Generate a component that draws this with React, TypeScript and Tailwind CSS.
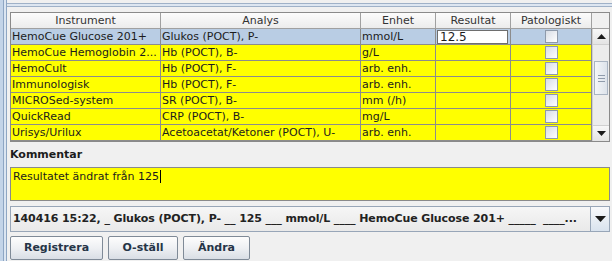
import React from 'react'

type Row = {
  instrument: string
  analys: string
  enhet: string
  resultat?: string
}

const rows: Row[] = [
  { instrument: 'HemoCue Glucose 201+', analys: 'Glukos (POCT), P-', enhet: 'mmol/L', resultat: '12.5' },
  { instrument: 'HemoCue Hemoglobin 2...', analys: 'Hb (POCT), B-', enhet: 'g/L' },
  { instrument: 'HemoCult', analys: 'Hb (POCT), F-', enhet: 'arb. enh.' },
  { instrument: 'Immunologisk', analys: 'Hb (POCT), F-', enhet: 'arb. enh.' },
  { instrument: 'MICROSed-system', analys: 'SR (POCT), B-', enhet: 'mm (/h)' },
  { instrument: 'QuickRead', analys: 'CRP (POCT), B-', enhet: 'mg/L' },
  { instrument: 'Urisys/Urilux', analys: 'Acetoacetat/Ketoner (POCT), U-', enhet: 'arb. enh.' },
]

const cols = 'grid grid-cols-[150px_200px_75px_75px_81px]'
const font = { fontFamily: '"DejaVu Sans", Verdana, sans-serif' }

function CheckBox() {
  return (
    <div className="w-[13px] h-[13px] border border-[#8e9aab] bg-gradient-to-br from-[#d8dde6] to-[#ffffff]" />
  )
}

function Arrow({ up }: { up?: boolean }) {
  return (
    <svg width="9" height="5" viewBox="0 0 9 5">
      {up ? <path d="M0 5 L4.5 0 L9 5 Z" fill="#1a1a1a" /> : <path d="M0 0 L4.5 5 L9 0 Z" fill="#1a1a1a" />}
    </svg>
  )
}

function ScrollBar() {
  return (
    <div className="w-[17px] flex flex-col bg-[#ececec] border-l border-[#d0d0d0]">
      <div className="h-[16px] flex items-center justify-center bg-gradient-to-b from-[#f7f7f7] to-[#e4e4e4] border-b border-[#d0d0d0]">
        <Arrow up />
      </div>
      <div className="h-[16px]" />
      <div className="h-[34px] mx-[1px] border border-[#a9b4c2] bg-gradient-to-r from-[#f4f6f9] to-[#dde3ea] flex flex-col items-center justify-center gap-[2px]">
        <div className="w-[7px] h-px bg-[#8f9bab]" />
        <div className="w-[7px] h-px bg-[#8f9bab]" />
        <div className="w-[7px] h-px bg-[#8f9bab]" />
      </div>
      <div className="flex-1" />
      <div className="h-[16px] flex items-center justify-center bg-gradient-to-b from-[#f7f7f7] to-[#e4e4e4] border-t border-[#d0d0d0]">
        <Arrow />
      </div>
    </div>
  )
}

export default function App() {
  return (
    <div className="w-[612px] h-[261px] bg-[#f0f0f0] flex overflow-hidden text-[11px] text-[#1c1c1c]" style={font}>
      {/* window frame */}
      <div className="flex h-full">
        <div className="w-[3px] bg-[#c3d4e8]" />
        <div className="w-px bg-[#8ea6c3]" />
        <div className="w-[2px] bg-[#dbe5f1]" />
        <div className="w-px bg-[#8ea6c3]" />
      </div>

      <div className="flex-1 flex flex-col min-w-0">
        <div className="h-[3px]" />
        <div className="h-px bg-[#9fb1c8]" />
        <div className="h-[2px] bg-[#dde6f1]" />
        <div className="h-px bg-[#9fb1c8]" />

        <div className="pl-[3px] pr-[2px] pt-[5px]">
          {/* table */}
          <div className="border border-[#8a8a8a] bg-[#f0f0f0]">
            <div className="flex h-[16px] border-b border-[#a0a0a0]">
              <div className={cols + ' bg-gradient-to-b from-[#fcfcfc] to-[#ececec] text-[#333]'}>
                {['Instrument', 'Analys', 'Enhet', 'Resultat', 'Patologiskt'].map((h) => (
                  <div key={h} className="border-r border-[#a0a0a0] flex items-center justify-center leading-none">
                    {h}
                  </div>
                ))}
              </div>
              <div className="flex-1" />
            </div>
            <div className="flex">
              <div className="flex flex-col">
                {rows.map((r, i) => (
                  <div
                    key={r.instrument}
                    className={cols + ' h-[16px] border-b border-[#8c8c8c] ' + (i === 0 ? 'bg-[#b9cde4]' : 'bg-[#ffff00]')}
                  >
                    <div className="border-r border-[#8c8c8c] pl-[1px] flex items-center whitespace-nowrap overflow-hidden leading-none">
                      {r.instrument}
                    </div>
                    <div className="border-r border-[#8c8c8c] pl-[1px] flex items-center whitespace-nowrap overflow-hidden leading-none">
                      {r.analys}
                    </div>
                    <div className="border-r border-[#8c8c8c] pl-[1px] flex items-center whitespace-nowrap overflow-hidden leading-none">
                      {r.enhet}
                    </div>
                    <div className="border-r border-[#8c8c8c] flex items-center pl-px pr-[2px]">
                      {r.resultat && (
                        <div className="w-full h-[14px] bg-white border border-[#6e6e6e] pl-[2px] flex items-center leading-none text-[12px]">
                          {r.resultat}
                        </div>
                      )}
                    </div>
                    <div className="border-r border-[#8c8c8c] flex items-center justify-center">
                      <CheckBox />
                    </div>
                  </div>
                ))}
              </div>
              <ScrollBar />
            </div>
          </div>

          <div className="font-bold h-[25px] flex items-center pt-[2px]">Kommentar</div>

          <div className="h-[34px] bg-[#ffff00] border border-[#8a8a8a] px-[2px] pt-[3px] flex items-start">
            <span className="leading-none text-[#1c1c1c]">Resultatet ändrat från 125</span>
            <span className="w-px h-[13px] bg-black ml-px -mt-[1px]" />
          </div>

          <div className="mt-[5px] h-[26px] flex border border-[#98a6b8] bg-gradient-to-b from-[#f6f6f6] to-[#e9e9e9]">
            <div className="flex-1 min-w-0 flex items-center pl-[2px] pr-[2px] font-bold whitespace-pre overflow-hidden text-[#222] tracking-[-0.1px]">
              140416 15:22, _ Glukos (POCT), P- __ 125 ___ mmol/L ____ HemoCue Glucose 201+ _____  ____...
            </div>
            <div className="w-[19px] border-l border-[#98a6b8] bg-gradient-to-b from-[#f8f9fb] to-[#d9e3ee] flex items-center justify-center">
              <svg width="11" height="6" viewBox="0 0 11 6">
                <path d="M0 0 L5.5 6 L11 0 Z" fill="#1a1a1a" />
              </svg>
            </div>
          </div>

          <div className="mt-[4px] flex gap-[5px]">
            {[
              ['Registrera', 'w-[93px]'],
              ['O-ställ', 'w-[70px]'],
              ['Ändra', 'w-[67px]'],
            ].map(([label, w]) => (
              <button
                key={label}
                className={w + ' h-[24px] border border-[#7f8a97] rounded-[2px] bg-gradient-to-b from-[#fdfdfd] via-[#eef0f3] to-[#d9dee5] font-bold text-[#253447] text-[11px] flex items-center justify-center'}
              >
                {label}
              </button>
            ))}
          </div>
        </div>
      </div>
    </div>
  )
}
